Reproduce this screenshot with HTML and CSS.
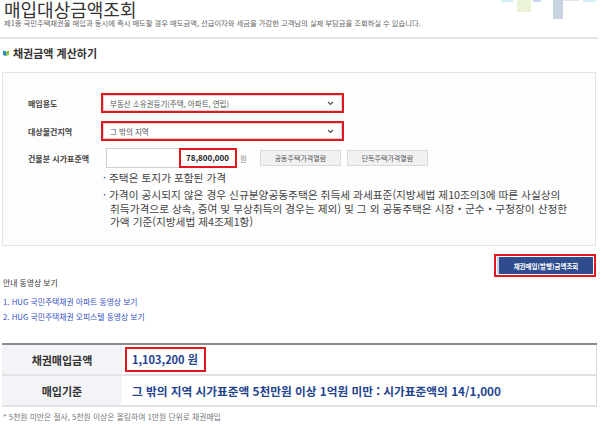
FILE: index.html
```html
<!DOCTYPE html>
<html lang="ko">
<head>
    <meta charset="UTF-8">
    <meta name="viewport" content="width=device-width, initial-scale=1.0">
    <title>매입대상금액조회</title>
    <link rel="stylesheet" href="styles.css">
</head>
<body>
    <div class="page">
        <header class="page-head">
            <div>
                <h1 class="title">매입대상금액조회</h1>
                <p class="desc">제1종 국민주택채권을 매입과 동시에 즉시 매도할 경우 매도금액, 선급이자와 세금을 가감한 고객님의 실제 부담금을 조회하실 수 있습니다.</p>
            </div>
            <svg class="deco" width="96" height="20" viewBox="0 0 96 20">
                <rect x="1" y="0" width="12" height="2" fill="#d5eff6"/>
                <rect x="17" y="0" width="14" height="12" fill="#ebf3d6"/>
                <rect x="33" y="0" width="8" height="2" fill="#c9d6ea"/>
                <rect x="53" y="0" width="10" height="19" fill="#c9d4e3"/>
                <rect x="63" y="0" width="16" height="1" fill="#e4e1ef"/>
                <rect x="83" y="0" width="13" height="2" fill="#d5eff6"/>
            </svg>
        </header>

        <h2 class="section-title">
            <svg class="book" width="6" height="6" viewBox="0 0 6 6">
                <path d="M0 0.5 L3 1.5 L3 6 L0 5Z" fill="#2d86c8"/>
                <path d="M3 1.5 L6 0.5 L6 5 L3 6Z" fill="#8dc63f"/>
            </svg>
            채권금액 계산하기
        </h2>

        <div class="calc-box">
            <div class="row">
                <span class="label">매입용도</span>
                <div class="select hl">
                    <span>부동산 소유권등기(주택, 아파트, 연립)</span>
                    <svg width="7" height="5" viewBox="0 0 7 5"><path d="M1 1 L3.5 3.5 L6 1" fill="none" stroke="#555" stroke-width="1.2"/></svg>
                </div>
            </div>
            <div class="row">
                <span class="label">대상물건지역</span>
                <div class="select hl">
                    <span>그 밖의 지역</span>
                    <svg width="7" height="5" viewBox="0 0 7 5"><path d="M1 1 L3.5 3.5 L6 1" fill="none" stroke="#555" stroke-width="1.2"/></svg>
                </div>
            </div>
            <div class="row">
                <span class="label">건물분 시가표준액</span>
                <div class="price-line">
                    <div class="price-input"><span class="price-value">78,800,000</span></div>
                    <span class="unit">원</span>
                    <button class="gray-btn">공동주택가격열람</button>
                    <button class="gray-btn">단독주택가격열람</button>
                </div>
            </div>
            <div class="notes">
                <p>· 주택은 토지가 포함된 가격</p>
                <p>· 가격이 공시되지 않은 경우 신규분양공동주택은 취득세 과세표준(지방세법 제10조의3에 따른 사실상의 취득가격으로 상속, 증여 및 무상취득의 경우는 제외) 및 그 외 공동주택은 시장・군수・구청장이 산정한 가액 기준(지방세법 제4조제1항)</p>
            </div>
        </div>

        <div class="actions">
            <div class="submit-wrap">
                <button class="submit-btn">채권매입(발행)금액조회</button>
            </div>
        </div>

        <div class="videos">
            <p class="videos-title">안내 동영상 보기</p>
            <a href="#">1. HUG 국민주택채권 아파트 동영상 보기</a>
            <a href="#">2. HUG 국민주택채권 오피스텔 동영상 보기</a>
        </div>

        <table class="result">
            <tr>
                <th>채권매입금액</th>
                <td><span class="amount">1,103,200 원</span></td>
            </tr>
            <tr>
                <th>매입기준</th>
                <td class="basis">그 밖의 지역 시가표준액 5천만원 이상 1억원 미만 : 시가표준액의 14/1,000</td>
            </tr>
        </table>

        <p class="footnote">* 5천원 미만은 절사, 5천원 이상은 올림하여 1만원 단위로 채권매입</p>
    </div>
</body>
</html>
```

FILE: styles.css
```css
* {
    font-family: "Noto Sans CJK KR", "Noto Sans", sans-serif;
    box-sizing: border-box;
}
html, body {
    margin: 0;
    background-color: #fff;
    color: #333;
}
.page {
    width: 598px;
}

/* header */
.page-head {
    display: flex;
    justify-content: space-between;
    align-items: flex-start;
    padding-bottom: 10px;
    border-bottom: 2px solid #e6e6e6;
}
.title {
    margin: 0 0 0 4px;
    font-size: 18px;
    line-height: 18px;
    font-weight: normal;
    color: #333;
}
.desc {
    margin: 1px 0 0 4px;
    font-size: 7.3px;
    line-height: 8px;
    color: #666;
    white-space: nowrap;
}
.deco {
    display: block;
    margin-right: 2px;
}

.section-title {
    display: flex;
    align-items: center;
    margin: 7px 0 12px 3px;
    font-size: 11px;
    line-height: 14px;
    font-weight: bold;
    color: #333;
}
.book {
    margin-right: 4px;
}

/* calculator box */
.calc-box {
    margin: 0 2px;
    padding: 20px 0 13px 25px;
    border: 1px solid #e4e4e4;
    background-color: #fdfdfd;
}
.row {
    display: grid;
    grid-template-columns: 73px auto;
    align-items: center;
    margin-bottom: 8px;
}
.row:nth-child(2) {
    margin-bottom: 7px;
}
.row:nth-child(3) {
    margin-bottom: 0;
}
.label {
    font-size: 8px;
    font-weight: bold;
    color: #444;
}
.select {
    display: flex;
    justify-content: space-between;
    align-items: center;
    width: 243px;
    height: 20px;
    padding: 0 8px 0 7px;
    background-color: #fff;
    font-size: 7.5px;
    color: #555;
}
.hl {
    border: 2px solid #e3151d;
    box-shadow: inset 0 0 0 1px #d6d6d6;
}
.price-line {
    display: flex;
    align-items: center;
    margin-left: 5px;
}
.price-input {
    display: flex;
    justify-content: flex-end;
    width: 131px;
    height: 20px;
    border: 1px solid #cfcfcf;
    border-right: 0;
    background-color: #fff;
}
.price-value {
    margin-top: -1px;
    height: 20px;
    padding: 0 6px 0 5px;
    border: 2px solid #e3151d;
    font-size: 8px;
    line-height: 16px;
    font-weight: bold;
    color: #222;
}
.unit {
    margin: 0 13px 0 3px;
    font-size: 7.5px;
    color: #888;
}
.gray-btn {
    width: 81px;
    height: 16px;
    margin-right: 6px;
    padding: 0;
    border: 1px solid #dadada;
    background-color: #f1f1f1;
    font-size: 7px;
    color: #555;
}
.notes {
    margin-left: 75px;
    padding-top: 3px;
}
.notes p {
    margin: 0 0 3.5px 0;
    padding-left: 7px;
    text-indent: -7px;
    width: 470px;
    font-size: 10.7px;
    line-height: 13.5px;
    color: #444;
}

/* submit */
.actions {
    display: flex;
    justify-content: flex-end;
    margin: 8px 2px 0 0;
}
.submit-wrap {
    padding: 1px;
    border: 2px solid #e3151d;
}
.submit-btn {
    display: block;
    width: 96px;
    height: 17px;
    padding: 0;
    border: 0;
    border-left: 2px solid #c9d2e6;
    background-color: #2f4d8e;
    font-size: 6.5px;
    font-weight: bold;
    color: #fff;
}

/* videos */
.videos {
    margin: 1px 0 0 3px;
    display: flex;
    flex-direction: column;
}
.videos-title {
    margin: 0 0 6px 0;
    font-size: 7.8px;
    line-height: 10px;
    color: #333;
}
.videos a {
    font-size: 7.8px;
    line-height: 15px;
    color: #3552c8;
    text-decoration: none;
}

/* result table */
.result {
    width: 595px;
    margin: 19px 0 0 2px;
    border-collapse: collapse;
    border-top: 2px solid #8a8a8a;
    border-right: 1px solid #dcdcdc;
}
.result tr {
    border-bottom: 2px solid #e3e3e3;
}
.result th {
    width: 120px;
    height: 31px;
    padding: 0;
    background-color: #f3f4f7;
    font-size: 11px;
    font-weight: bold;
    color: #333;
}
.result td {
    padding: 0 0 0 3px;
    font-size: 11px;
    font-weight: bold;
    color: #24438f;
}
.result td.basis {
    padding-left: 10px;
    font-size: 11.7px;
}
.amount {
    display: inline-block;
    padding: 3px 6px 3px 5px;
    border: 2px solid #e3151d;
    line-height: 15px;
}

.footnote {
    margin: 5px 0 0 3px;
    font-size: 7.8px;
    line-height: 10px;
    color: #777;
}
```
